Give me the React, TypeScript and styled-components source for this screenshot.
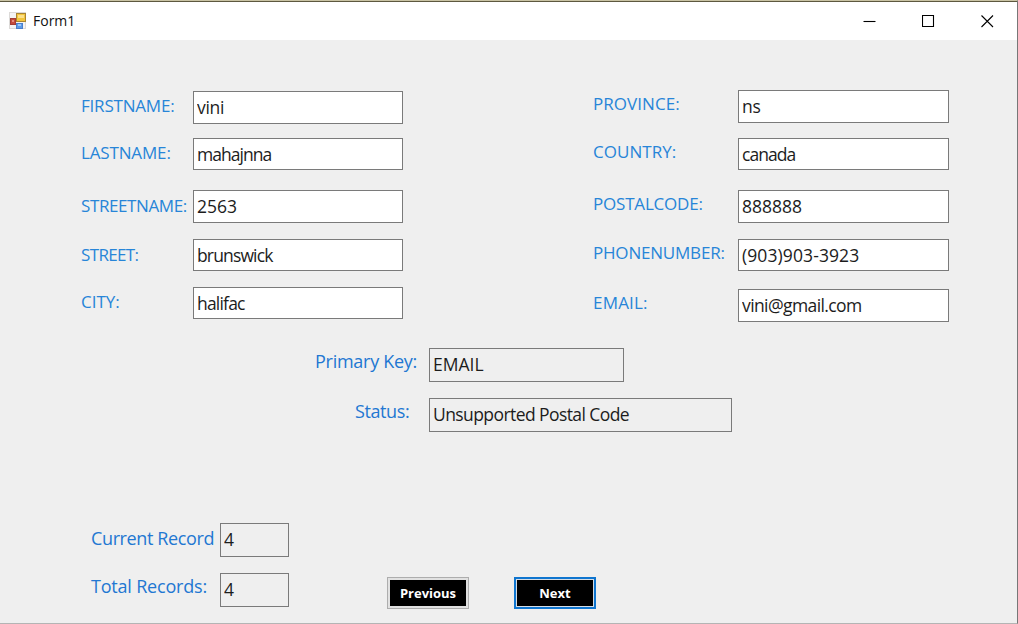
import React from "react";
import styled, { createGlobalStyle } from "styled-components";

const GlobalStyle = createGlobalStyle`
  *, *::before, *::after { box-sizing: border-box; }
  body {
    margin: 0;
    overflow: hidden;
    background: #f0f0f0;
    font-family: "Open Sans", "Noto Sans", sans-serif;
  }
`;

const Window = styled.div`
  display: flex;
  flex-direction: column;
  width: 1018px;
  height: 624px;
  background: #efefef;
  border-top: 1px solid #c9c3a4;
  border-right: 1px solid #777;
  border-bottom: 1px solid #b4b4b4;
`;

const TitleBar = styled.header`
  display: flex;
  align-items: center;
  height: 39px;
  flex: none;
  padding-left: 9px;
  background: #fff;
  border-top: 1px solid #5d583f;
`;

const Title = styled.h1`
  flex: 1;
  margin: 0 0 0 7px;
  font-size: 14px;
  font-weight: 400;
  line-height: 20px;
  color: #111;
`;

const Controls = styled.div`
  display: flex;
  gap: 46px;
  padding-right: 23px;
`;

const Control = styled.svg`
  display: block;
  width: 13px;
  height: 13px;
  fill: none;
  stroke: #000;
  stroke-width: 1.1;
`;

const Form = styled.main`
  display: flex;
  flex-direction: column;
`;

const AddressArea = styled.section`
  display: flex;
  justify-content: space-between;
  height: 282px;
  padding: 50px 68px 0 81px;
`;

const Column = styled.div`
  display: flex;
  flex-direction: column;
`;

const FieldRow = styled.label<{ $gap?: number; $indent?: number }>`
  display: flex;
  align-items: flex-start;
  margin-top: ${(p) => p.$gap ?? 0}px;
  margin-left: ${(p) => p.$indent ?? 0}px;
`;

const Caption = styled.span<{ $width: number; $drop: number; $track?: number; $large?: boolean }>`
  flex: none;
  width: ${(p) => p.$width}px;
  height: 28px;
  padding-top: ${(p) => p.$drop}px;
  font-size: ${(p) => (p.$large ? 18 : 17)}px;
  line-height: 24px;
  letter-spacing: ${(p) => p.$track ?? 0}px;
  white-space: nowrap;
  color: ${(p) => (p.$large ? "#2277d2" : "#2785d8")};
`;

const TextBox = styled.input<{ $width: number; $height?: number; $track?: number }>`
  width: ${(p) => p.$width}px;
  height: ${(p) => p.$height ?? 34}px;
  margin: 0;
  padding: 0 3px ${(p) => (p.readOnly ? 3 : 1)}px;
  border: 1px solid #7a7a7a;
  border-radius: 0;
  outline: none;
  background: ${(p) => (p.readOnly ? "#efefef" : "#fff")};
  font-family: inherit;
  font-size: 17.5px;
  line-height: 24px;
  letter-spacing: ${(p) => p.$track ?? 0}px;
  color: #1c1c1c;
`;

const SummaryArea = styled.section`
  display: flex;
  flex-direction: column;
  padding-top: 26px;
`;

const Footer = styled.section`
  display: flex;
  align-items: flex-end;
  padding: 91px 0 0 91px;
`;

const Buttons = styled.div`
  display: flex;
  gap: 45px;
  margin: 0 0 -2px 98px;
`;

const Button = styled.button<{ $primary?: boolean }>`
  width: 82px;
  height: 32px;
  margin: 0;
  padding: 0;
  border: ${(p) => (p.$primary ? "2px solid #0f75cf" : "1px solid #adadad")};
  border-radius: 0;
  background: #000;
  box-shadow: inset 0 0 0 ${(p) => (p.$primary ? "1px #d5dde5" : "2px #e1e1e1")};
  font-family: inherit;
  font-size: 13px;
  font-weight: 700;
  color: #fff;
`;

const AppIcon = () => (
  <svg width="17" height="18" viewBox="0 0 17 18">
    <rect x="0.5" y="0.5" width="16" height="16" fill="#f4f3f3" stroke="#dcdad8" />
    <rect x="7.5" y="1.5" width="9" height="8" fill="#f3c53c" stroke="#a98532" />
    <rect x="9" y="3" width="6" height="3" fill="#fbe08a" />
    <rect x="1.5" y="6.5" width="5" height="6" fill="#c44a3c" stroke="#a33d36" />
    <rect x="3" y="8" width="2" height="2" fill="#e58c7d" />
    <rect x="7.5" y="11.5" width="6" height="5" fill="#5b9bea" stroke="#4a7fcb" />
    <rect x="9" y="12" width="3" height="2" fill="#9cc5f5" />
  </svg>
);

type Field = {
  label: string;
  value: string;
  gap?: number;
  drop: number;
  height: number;
  track?: number;
  valueTrack?: number;
};

const leftFields: Field[] = [
  { label: "FIRSTNAME:", value: "vini", gap: 1, height: 33, drop: 3, track: -0.2, valueTrack: -0.3 },
  { label: "LASTNAME:", value: "mahajnna", gap: 14, height: 32, drop: 3, track: -0.15, valueTrack: -0.95 },
  { label: "STREETNAME:", value: "2563", gap: 20, height: 33, drop: 4, track: -0.4 },
  { label: "STREET:", value: "brunswick", gap: 16, height: 32, drop: 4, track: -0.65, valueTrack: -0.85 },
  { label: "CITY:", value: "halifac", gap: 16, height: 32, drop: 3, track: 0, valueTrack: -0.8 },
];

const rightFields: Field[] = [
  { label: "PROVINCE:", value: "ns", height: 33, drop: 2, track: 0.05, valueTrack: -0.3 },
  { label: "COUNTRY:", value: "canada", gap: 15, height: 32, drop: 2, track: 0.05, valueTrack: -0.95 },
  { label: "POSTALCODE:", value: "888888", gap: 20, height: 33, drop: 2, track: -0.2 },
  { label: "PHONENUMBER:", value: "(903)903-3923", gap: 16, height: 32, drop: 2, track: -0.2, valueTrack: 0.1 },
  { label: "EMAIL:", value: "vini@gmail.com", gap: 18, height: 33, drop: 2, track: 0.2, valueTrack: -0.6 },
];

const FieldColumn = ({ fields, captionWidth, boxWidth }: { fields: Field[]; captionWidth: number; boxWidth: number }) => (
  <Column>
    {fields.map((f) => (
      <FieldRow key={f.label} $gap={f.gap}>
        <Caption $width={captionWidth} $drop={f.drop} $track={f.track}>{f.label}</Caption>
        <TextBox $width={boxWidth} $height={f.height} $track={f.valueTrack} defaultValue={f.value} />
      </FieldRow>
    ))}
  </Column>
);

export default function App() {
  return (
    <Window>
      <GlobalStyle />
      <TitleBar>
        <AppIcon />
        <Title>Form1</Title>
        <Controls>
          <Control viewBox="0 0 13 13"><path d="M.5 6.5H12.5" /></Control>
          <Control viewBox="0 0 13 13"><path d="M.5 .5H11.5V11.5H.5Z" /></Control>
          <Control viewBox="0 0 13 13"><path d="M.5 .5L12 12M12 .5L.5 12" /></Control>
        </Controls>
      </TitleBar>
      <Form>
        <AddressArea>
          <FieldColumn fields={leftFields} captionWidth={112} boxWidth={210} />
          <FieldColumn fields={rightFields} captionWidth={145} boxWidth={211} />
        </AddressArea>
        <SummaryArea>
          <FieldRow $indent={315}>
            <Caption $large $width={114} $drop={1} $track={-0.27}>Primary Key:</Caption>
            <TextBox readOnly $width={195} defaultValue="EMAIL" />
          </FieldRow>
          <FieldRow $indent={355} $gap={16}>
            <Caption $large $width={74} $drop={1} $track={-0.4}>Status:</Caption>
            <TextBox readOnly $width={303} $track={-0.58} defaultValue="Unsupported Postal Code" />
          </FieldRow>
        </SummaryArea>
        <Footer>
          <Column>
            <FieldRow>
              <Caption $large $width={129} $drop={3} $track={-0.37}>Current Record</Caption>
              <TextBox readOnly $width={69} defaultValue="4" />
            </FieldRow>
            <FieldRow $gap={16}>
              <Caption $large $width={129} $drop={1} $track={-0.2}>Total Records:</Caption>
              <TextBox readOnly $width={69} defaultValue="4" />
            </FieldRow>
          </Column>
          <Buttons>
            <Button>Previous</Button>
            <Button $primary>Next</Button>
          </Buttons>
        </Footer>
      </Form>
    </Window>
  );
}
